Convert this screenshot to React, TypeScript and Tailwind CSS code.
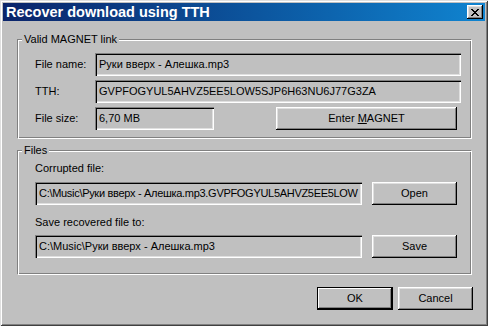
import React from "react";

const sunken =
  "bg-[#c0c0c0] shadow-[inset_1px_1px_#808080,inset_2px_2px_#000,inset_-1px_-1px_#fff,inset_-2px_-2px_#dfdfdf]";
const raised =
  "bg-[#c0c0c0] shadow-[inset_-1px_-1px_#000,inset_1px_1px_#fff,inset_-2px_-2px_#808080,inset_2px_2px_#dfdfdf]";
const etched =
  "relative border border-t-[#808080] border-l-[#808080] border-b-white border-r-white shadow-[inset_1px_1px_#fff,inset_-1px_-1px_#808080]";

const Edit = ({ value, className = "" }: { value: string; className?: string }) => (
  <div className={`${sunken} h-[23px] flex items-center pl-[4px] overflow-hidden whitespace-nowrap ${className}`}>
    <span>{value}</span>
  </div>
);

const Button = ({ children, className = "" }: { children: React.ReactNode; className?: string }) => (
  <button className={`${raised} h-[23px] flex items-center justify-center ${className}`}>
    <span>{children}</span>
  </button>
);

const CloseGlyph = () => (
  <svg width="8" height="7" viewBox="0 0 8 7" shapeRendering="crispEdges">
    <g fill="#000">
      <rect x="0" y="0" width="2" height="1" />
      <rect x="6" y="0" width="2" height="1" />
      <rect x="1" y="1" width="2" height="1" />
      <rect x="5" y="1" width="2" height="1" />
      <rect x="2" y="2" width="4" height="1" />
      <rect x="3" y="3" width="2" height="1" />
      <rect x="2" y="4" width="4" height="1" />
      <rect x="1" y="5" width="2" height="1" />
      <rect x="5" y="5" width="2" height="1" />
      <rect x="0" y="6" width="2" height="1" />
      <rect x="6" y="6" width="2" height="1" />
    </g>
  </svg>
);

export default function App() {
  return (
    <div className="w-[488px] h-[326px] bg-[#c0c0c0] p-[3px] flex flex-col font-['Liberation_Sans',Arial,sans-serif] text-[11px] leading-[13px] text-black shadow-[inset_1px_1px_#dfdfdf,inset_-1px_-1px_#404040,inset_2px_2px_#fff,inset_-2px_-2px_#808080]">
      {/* Title bar */}
      <div className="h-[18px] flex items-center justify-between pl-[3px] pr-[2px] bg-linear-to-r from-[#0a246a] to-[#1084d0]">
        <span className="text-white font-bold text-[14.5px] leading-[16px]">Recover download using TTH</span>
        <button className={`${raised} w-[16px] h-[14px] flex items-center justify-center`}>
          <CloseGlyph />
        </button>
      </div>

      <div className="flex flex-col pl-[14px]">
        {/* Group 1 */}
        <div className={`${etched} mt-[18px] mr-[13px] h-[100px] pt-[13px] pl-[17px] pr-[10px] flex flex-col gap-[4px]`}>
          <span className="absolute left-[4px] -top-[7px] px-[2px] bg-[#c0c0c0]">Valid MAGNET link</span>
          <div className="flex items-center">
            <span className="w-[60px]">File name:</span>
            <Edit value="Руки вверх - Алешка.mp3" className="flex-1" />
          </div>
          <div className="flex items-center">
            <span className="w-[60px]">TTH:</span>
            <Edit value="GVPFOGYUL5AHVZ5EE5LOW5SJP6H63NU6J77G3ZA" className="flex-1" />
          </div>
          <div className="flex items-center">
            <span className="w-[60px]">File size:</span>
            <Edit value="6,70 MB" className="w-[119px]" />
            <Button className="w-[181px] ml-[62px]">
              Enter <span className="underline">M</span>AGNET
            </Button>
          </div>
        </div>

        {/* Group 2 */}
        <div className={`${etched} mt-[11px] mr-[13px] h-[125px] pt-[11px] pl-[17px] flex flex-col`}>
          <span className="absolute left-[4px] -top-[7px] px-[2px] bg-[#c0c0c0]">Files</span>
          <span>Corrupted file:</span>
          <div className="flex items-center mt-[7px]">
            <Edit value="C:\Music\Руки вверх - Алешка.mp3.GVPFOGYUL5AHVZ5EE5LOW" className="w-[327px] tracking-[-0.3px]" />
            <Button className="w-[85px] ml-[10px]">Open</Button>
          </div>
          <span className="mt-[11px]">Save recovered file to:</span>
          <div className="flex items-center mt-[6px]">
            <Edit value="C:\Music\Руки вверх - Алешка.mp3" className="w-[327px]" />
            <Button className="w-[85px] ml-[10px]">Save</Button>
          </div>
        </div>

        {/* Dialog buttons */}
        <div className="flex justify-end gap-[5px] mt-[12px] pr-[12px]">
          <button className="w-[76px] h-[23px] border border-black bg-[#c0c0c0] shadow-[inset_-1px_-1px_#000,inset_1px_1px_#fff,inset_-2px_-2px_#808080] flex items-center justify-center">
            <span>OK</span>
          </button>
          <Button className="w-[75px]">Cancel</Button>
        </div>
      </div>
    </div>
  );
}
